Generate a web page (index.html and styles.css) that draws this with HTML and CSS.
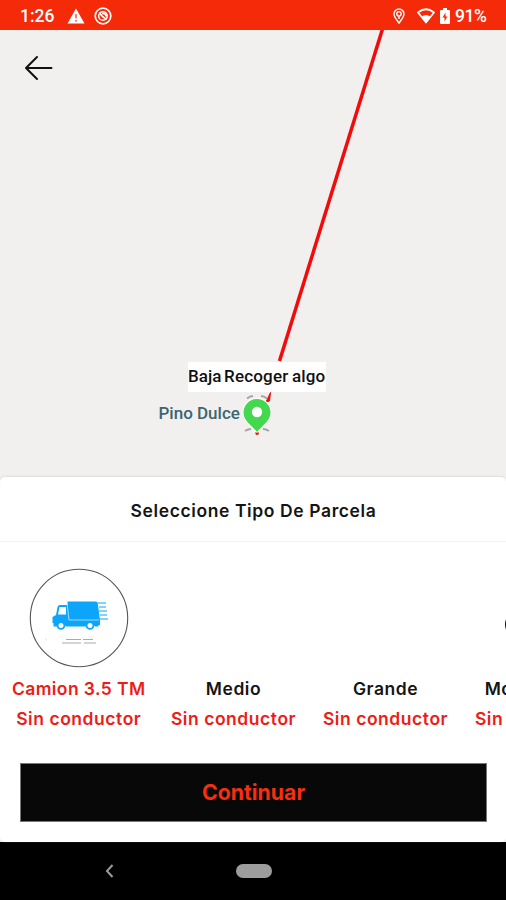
FILE: index.html
```html
<!DOCTYPE html>
<html lang="es">
<head>
<meta charset="utf-8">
<title>Seleccione Tipo De Parcela</title>
<link rel="stylesheet" href="styles.css">
</head>
<body>
<div class="screen">
  <header class="status">
    <span class="time">1:26</span>
    <svg class="warn" width="18" height="16" viewBox="0 0 18 16"><path d="M9 .5 17.500 15.500H.5Z" fill="#fff"/><path d="M9 6v4.500M9 12v1.800" stroke="#f55a3c" stroke-width="1.500"/></svg>
    <svg class="sync" width="18" height="18" viewBox="0 0 18 18" fill="none" stroke="#fff"><circle cx="9" cy="9" r="7.800" stroke-width="1.700"/><circle cx="9" cy="9" r="4.300" stroke-width="1.500"/><path d="M5.500 5.500Q7 9 12.500 12.200M8 6.500Q11.500 6 12.500 9.500" stroke-width="1.800"/></svg>
    <span class="grow"></span>
    <svg class="loc" width="12" height="16" viewBox="0 0 12 16" fill="none" stroke="#fff" stroke-width="1.400"><path d="M6 15C3.500 11.500 1 8.900 1 6a5 5 0 0 1 10 0C11 8.900 8.500 11.500 6 15Z"/><circle cx="6" cy="5.800" r="2.200"/><path d="M6 8v3"/></svg>
    <svg class="wifi" width="18" height="16" viewBox="0 0 18 16"><path d="M1 4.500Q9-2 17 4.500L9 14.500Z" fill="none" stroke="#fff" stroke-width="1.700" stroke-linejoin="round"/><path d="M4.500 8.700Q9 5.500 13.500 8.700L9 14.800Z" fill="#fff"/></svg>
    <svg class="battery" width="10" height="16" viewBox="0 0 10 16"><path d="M3 0h4v2h2q1 0 1 1v12q0 1-1 1H1q-1 0-1-1V3q0-1 1-1h2Z" fill="#fff"/><path d="M5.500 4.500 2.500 9.500H4.500V13.500L7.500 8.500H5.500Z" fill="#f42a08"/></svg>
    <span class="level">91%</span>
  </header>
  <main class="map">
    <svg class="route" width="506" height="447" viewBox="0 30 506 447">
      <path d="M382.500 29 279.500 361" stroke="#f30b0b" stroke-width="3.500"/>
      <path d="M270.500 392.500 266 402 269.500 401Z" fill="#f30b0b" stroke="#f30b0b"/>
      <path d="M247 398.500q3-2.500 6-2.500M261 396q3 0 6 2.500M245 431q3-2 6-2M263 429q3 0 6 2" fill="none" stroke="#a2a6a7" stroke-width="2"/>
      <path d="M257 434.500C250 425 242.500 420.500 242.500 412.500a14.500 14.500 0 0 1 29 0C271.500 420.500 264 425 257 434.500Z" fill="#fff"/>
      <path d="M257 432C251 425 243.500 420.500 243.500 412.500a13.500 13.500 0 0 1 27 0C270.500 420.500 263 425 257 432Z" fill="#43d84f"/>
      <circle cx="257" cy="412" r="5.200" fill="#fff"/><path d="M255 432.500h4v1.500l-1.500 1h-1.500Z" fill="#e5291d"/>
    </svg>
    <svg class="back" width="30" height="26" viewBox="0 0 30 26" fill="none" stroke="#111" stroke-width="2" stroke-linecap="round" stroke-linejoin="round"><path d="M27.500 13H2M13 2 2 13 13 24"/></svg>
    <div class="callout"><span class="w1">Baja</span><span class="w2">Recoger</span><span class="w3">algo</span></div>
    <div class="place">Pino Dulce</div>
  </main>
  <section class="sheet">
    <h1 class="title">Seleccione Tipo De Parcela</h1>
    <div class="types">
      <div class="type selected">
        <div class="pic"><svg width="100" height="100" viewBox="0 0 100 100">
          <circle cx="50" cy="50" r="48.700" fill="#fff" stroke="#555" stroke-width="1.100"/>
          <path d="M38.500 33.500H67q1.500 0 1.700 1.500L71 52v5h-1.500v1.500H66a5 5 0 0 0-9 0H37a5 5 0 0 0-9 0h-3.500V55H23.500V49l3.500-2 1.500-8q.5-2 2.500-2h7.500Z" fill="#0da5fa"/>
          <path d="M30.500 39h6.500v7.500h-8Z" fill="#fff"/>
          <path d="M38 35 40 52H70" fill="none" stroke="#c5eaff" stroke-width=".8"/>
          <g fill="#fff" stroke="#0da5fa" stroke-width="1.800"><circle cx="32" cy="57.500" r="3.400"/><circle cx="61" cy="57.500" r="3.400"/></g>
          <path d="M69 35h8M70 39h7M70 43h8M71 47h7M71 51h8" stroke="#5bc3fb" stroke-width="1.300"/>
          <path d="M37 71.500H52M54 71.500H64M33 75H52M55 75H67" stroke="#aaa" stroke-width="1"/><path d="M17 70.500v2" stroke="#ddd"/>
        </svg></div>
        <div class="name">Camion 3.5 TM</div><div class="note">Sin conductor</div>
      </div>
      <div class="type"><div class="pic"></div><div class="name">Medio</div><div class="note">Sin conductor</div></div>
      <div class="type"><div class="pic"></div><div class="name">Grande</div><div class="note">Sin conductor</div></div>
      <div class="type"><div class="pic"><svg width="66" height="100" viewBox="0 0 66 100"><circle cx="13.500" cy="56.500" r="12" fill="none" stroke="#111" stroke-width="3"/></svg></div><div class="name">Motocicleta</div><div class="note">Sin conductor</div></div>
    </div>
    <button class="continue">Continuar</button>
  </section>
  <nav class="nav">
    <svg class="prev" width="9" height="14" viewBox="0 0 9 14"><path d="M7.500 1 2 7l5.500 6" fill="none" stroke="#9b9b9b" stroke-width="2"/></svg>
    <span class="home"></span>
  </nav>
</div>
</body>
</html>
```
FILE: styles.css
```css
* { box-sizing: border-box; }
body { margin: 0; background: #000; font-family: Inter, sans-serif; }
.screen { width: 506px; height: 900px; overflow: hidden; display: flex; flex-direction: column; background: #f1f0ee; }
.status { height: 30px; flex: none; display: flex; align-items: center; padding: 1px 18px 0 20px; background: #f42a08; color: #fff; font: 500 17.5px/30px Roboto, sans-serif; }
.time { width: 47px; }
.sync { margin-left: 9px; }
.grow { flex: 1; }
.wifi { margin-left: 12px; }
.battery { margin: 0 5px 0 5px; }
.level { width: 33px; letter-spacing: -.4px; }
.map { height: 447px; flex: none; position: relative; background: #f1f0ee; }
.route { display: block; }
.back { position: absolute; left: 24px; top: 25px; }
.callout { position: absolute; left: 188px; top: 332px; width: 138px; height: 30px; background: #fff; color: #111; font: 500 17px/29px Roboto, sans-serif; display: flex; white-space: nowrap; }
.w1 { width: 36px; }
.w2 { width: 68px; letter-spacing: .2px; }
.w3 { letter-spacing: .1px; }
.place { position: absolute; left: 158.5px; top: 373px; color: #3b6570; font: 500 17px/20px Roboto, sans-serif; white-space: nowrap; }
.sheet { height: 365px; flex: none; background: #fff; border-radius: 5px; box-shadow: 0 -1px 2px #ddd; position: relative; }
.title { margin: 0; height: 65px; border-bottom: 1px solid #f0f0f0; text-align: center; font-size: 17.5px; font-weight: 600; line-height: 67px; letter-spacing: .6px; text-indent: 1px; color: #151515; }
.types { display: flex; height: 221px; padding-top: 26px; overflow: hidden; }
.type { width: 152px; flex: none; text-align: center; font-size: 17.5px; font-weight: 600; letter-spacing: .55px; white-space: nowrap; color: #151515; }
.type:first-child { width: 157.5px; }
.pic { height: 100px; display: flex; justify-content: center; }
.pic svg { display: block; }
.name { margin-top: 6px; line-height: 30px; }
.note { line-height: 30px; color: #ee1c17; }
.selected .name { color: #ee1c17; letter-spacing: .4px; }
.continue { display: block; width: 467px; height: 59px; margin: 0 0 0 20px; padding: 0; border: 1px solid #777; background: #080808; color: #f42f12; font: 700 21.3px/57px Inter, sans-serif; }
.nav { height: 58px; flex: none; background: #000; display: flex; align-items: center; padding-left: 105px; }
.home { width: 36px; height: 14px; margin-left: 122px; border-radius: 7px; background: #9d9d9d; }
```
